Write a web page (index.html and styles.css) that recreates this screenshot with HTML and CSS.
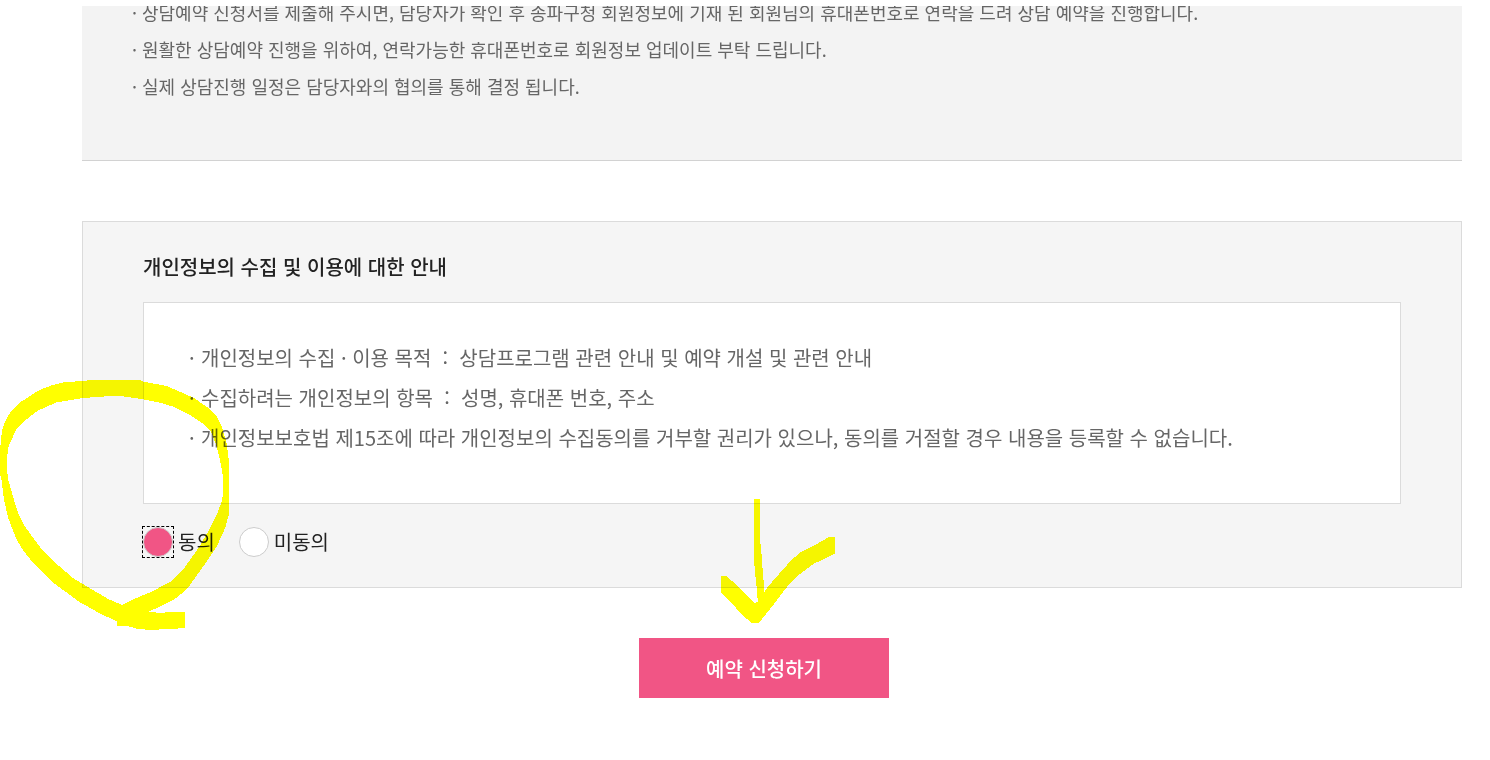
FILE: index.html
```html
<!DOCTYPE html>
<html lang="ko">
<head>
    <meta charset="UTF-8">
    <meta name="viewport" content="width=device-width, initial-scale=1.0">
    <title>상담예약 신청</title>
    <link rel="stylesheet" href="styles.css">
</head>
<body>
    <main class="container">
        <section class="notice">
            <ul class="notice-list">
                <li>상담예약 신청서를 제출해 주시면, 담당자가 확인 후 송파구청 회원정보에 기재 된 회원님의 휴대폰번호로 연락을 드려 상담 예약을 진행합니다.</li>
                <li>원활한 상담예약 진행을 위하여, 연락가능한 휴대폰번호로 회원정보 업데이트 부탁 드립니다.</li>
                <li>실제 상담진행 일정은 담당자와의 협의를 통해 결정 됩니다.</li>
            </ul>
        </section>

        <form>
            <section class="agree">
                <h2>개인정보의 수집 및 이용에 대한 안내</h2>
                <div class="agree-box">
                    <ul class="agree-list">
                        <li>개인정보의 수집 · 이용 목적 &nbsp;:&nbsp; 상담프로그램 관련 안내 및 예약 개설 및 관련 안내</li>
                        <li>수집하려는 개인정보의 항목 &nbsp;:&nbsp; 성명, 휴대폰 번호, 주소</li>
                        <li>개인정보보호법 제15조에 따라 개인정보의 수집동의를 거부할 권리가 있으나, 동의를 거절할 경우 내용을 등록할 수 없습니다.</li>
                    </ul>
                </div>
                <div class="agree-radio">
                    <label for="agreeY"><input type="radio" id="agreeY" name="agree" value="Y" checked>동의</label>
                    <label for="agreeN"><input type="radio" id="agreeN" name="agree" value="N">미동의</label>
                </div>
            </section>

            <div class="btn-area">
                <button type="button" class="btn-submit">예약 신청하기</button>
            </div>
        </form>
    </main>

    <!-- highlighter marks -->
    <svg class="mark mark-circle" viewBox="0 0 750 810" aria-hidden="true">
        <path fill-rule="evenodd" d="M351 755L290 725L237 695L165 642L100 580L70 542L48 505L25 445L12 390L3 318H0V225H3V205L7 180L15 155L30 128L62 96L118 60L155 46L192 37L245 33L276 30H418L430 35L500 48L580 83L620 110L650 140L665 170L680 220L687 275V432L675 475L650 530L615 582L570 645L547 669L520 690L480 710L440 727L495 728V726H555V773L515 778L440 779L410 776L380 767H351Z
        M367 705L400 688L455 665L515 633L550 598L595 535L630 475L650 435L665 395L669 375V320L660 270L650 230L635 188L608 160L575 138L520 110L480 98L430 88L360 78H332L248 84L170 97L115 121L70 155L48 180L35 208L25 232L21 265V300L25 330L42 390L55 430L72 465L95 498L125 538L170 582L220 625L265 652L325 687Z"/>
    </svg>
    <svg class="mark mark-arrow" viewBox="0 0 600 420" aria-hidden="true">
        <path d="M162 27H180V160L183 165L186 220L189 250L192 290V308L203 291L230 260L270 215L300 187L350 162L385 142L405 141V191L340 222L300 252L260 292L220 345L185 388L176 399H154L125 372L95 340L63 308V258H80L130 305L165 340L173 335L172 310L167 265L162 210Z"/>
    </svg>
</body>
</html>
```

FILE: styles.css
```css
* {
    box-sizing: border-box;
}
body {
    position: relative;
    margin: 0;
    background: #fff;
    color: #222;
    font-family: 'Noto Sans CJK KR', sans-serif;
    font-size: 20px;
}
ul {
    margin: 0;
    padding: 0;
    list-style: none;
}
.container {
    padding: 6px 28px 60px 82px;
}

/* notice */
.notice {
    overflow: hidden;
    padding: 0 50px 55px;
    background: #f3f3f3;
    border-bottom: 1px solid #d2d2d2;
}
.notice-list {
    margin-top: -12px;
    color: #666;
    font-size: 18px;
    line-height: 37px;
}
.notice-list li,
.agree-list li {
    display: flex;
}
.notice-list li::before,
.agree-list li::before {
    content: '·';
    flex: none;
    width: 10px;
}

/* privacy agreement */
.agree {
    margin-top: 60px;
    padding: 30px 60px;
    background: #f5f5f5;
    border: 1px solid #dbdbdb;
}
.agree h2 {
    margin: 0 0 20px;
    font-size: 20px;
    font-weight: 500;
    line-height: 30px;
}
.agree-box {
    padding: 35px 45px 45px;
    background: #fff;
    border: 1px solid #dbdbdb;
}
.agree-list {
    color: #666;
    line-height: 40px;
}
.agree-list li::before {
    width: 12px;
}
.agree-radio {
    display: flex;
    gap: 24px;
    margin-top: 23px;
    line-height: 30px;
}
.agree-radio label {
    display: flex;
    align-items: center;
    gap: 5px;
}
.agree-radio input {
    appearance: none;
    width: 30px;
    height: 30px;
    margin: 0;
    background: #fff;
    border: 1px solid #ccc;
    border-radius: 50%;
}
.agree-radio input:checked {
    position: relative;
    background: #f15585;
}
/* square focus frame round the picked option */
.agree-radio input:checked::after {
    content: '';
    position: absolute;
    inset: -2px;
    border: 1px dashed #000;
}

.btn-area {
    margin-top: 50px;
    padding-right: 16px;
    text-align: center;
}
.btn-submit {
    width: 250px;
    height: 60px;
    padding: 0;
    border: 0;
    background: #f15585;
    color: #fff;
    font-family: inherit;
    font-size: 20px;
    font-weight: 500;
    cursor: pointer;
}

.mark {
    position: absolute;
    fill: #ff0;
    shape-rendering: crispEdges;
    mix-blend-mode: multiply;
    pointer-events: none;
}
.mark-circle {
    top: 370px;
    left: 0;
    width: 250px;
    height: 270px;
}
.mark-arrow {
    top: 490px;
    left: 700px;
    width: 200px;
    height: 140px;
}
```
